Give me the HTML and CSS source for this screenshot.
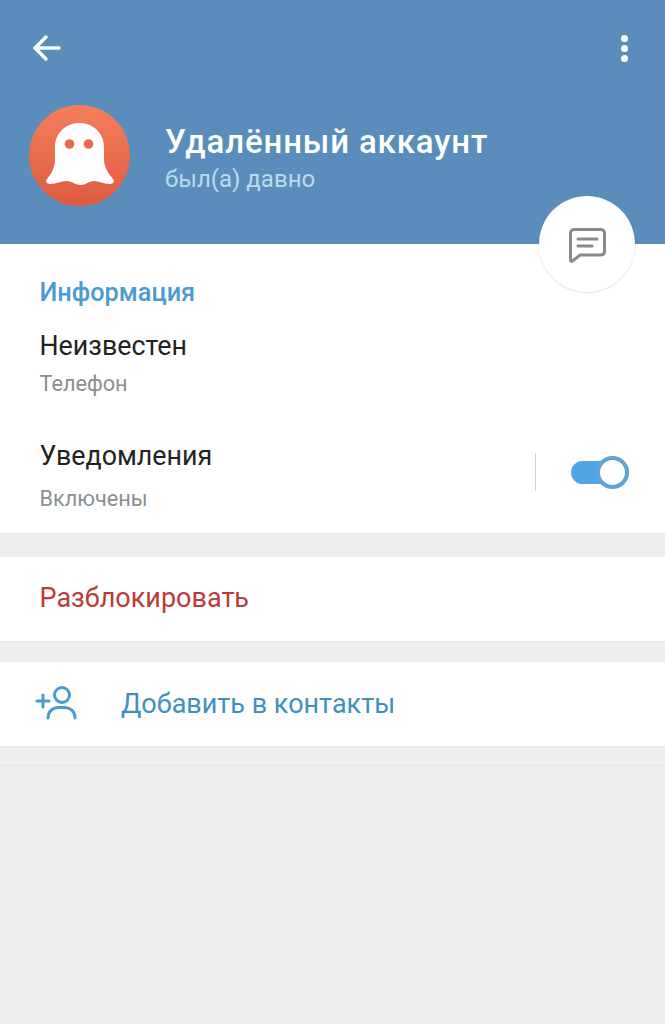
FILE: index.html
```html
<!DOCTYPE html>
<html lang="ru">
<head>
    <meta charset="UTF-8">
    <meta name="viewport" content="width=device-width, initial-scale=1.0">
    <title>Удалённый аккаунт</title>
    <link rel="stylesheet" href="styles.css">
</head>
<body>

<header class="profile-header">
    <div class="toolbar">
        <svg class="back-icon" width="32" height="32" viewBox="0 0 32 32" fill="none" stroke="#fff" stroke-width="3.4" stroke-linecap="round" stroke-linejoin="round">
            <path d="M5 16H29"/>
            <path d="M16 5L5 16L16 27"/>
        </svg>
        <div class="more-icon"><span></span><span></span><span></span></div>
    </div>
    <div class="profile">
        <div class="avatar">
            <svg width="68" height="64" viewBox="0 0 68 64">
                <path fill="#fff" d="M33.500 0C20 0 9 10 9 24V36C9 44 6 50 1 56C-1 59 1 61 4 61C11 61 15 58 21 58C26 58 29 62 34.500 62C40 62 43 58 48 58C53 58 57 61 64 61C67 61 69 59 67 56C62 50 58 44 58 36V24C58 10 47 0 33.500 0Z"/>
                <circle cx="23.500" cy="21" r="4.800" fill="#E8694B"/>
                <circle cx="42.500" cy="21" r="4.800" fill="#E8694B"/>
            </svg>
        </div>
        <div class="profile-text">
            <h1>Удалённый аккаунт</h1>
            <p>был(а) давно</p>
        </div>
    </div>
    <div class="message-btn">
        <svg width="40" height="38" viewBox="0 0 40 38" fill="none" stroke="#8a8a8a" stroke-width="3" stroke-linecap="round" stroke-linejoin="round">
            <path d="M3.500 8.500C3.500 6 5 4.500 7.500 4.500H33.500C36 4.500 37.500 6 37.500 8.500V26C37.500 28.500 36 30 33.500 30H13L5.500 36C4.500 36.700 3.500 36 3.500 35Z"/>
            <path d="M11 14H30"/>
            <path d="M11 21H25"/>
        </svg>
    </div>
</header>

<section class="card info-card">
    <h2>Информация</h2>
    <div class="info-row">
        <div class="value">Неизвестен</div>
        <div class="label">Телефон</div>
    </div>
    <div class="info-row notify-row">
        <div>
            <div class="value">Уведомления</div>
            <div class="label label-notify">Включены</div>
        </div>
        <div class="notify-control">
            <div class="divider"></div>
            <div class="switch"><span class="knob"></span></div>
        </div>
    </div>
</section>

<section class="card action-card">
    <span class="unblock">Разблокировать</span>
</section>

<section class="card action-card add-card">
    <svg class="add-icon" width="42" height="34" viewBox="0 0 42 34" fill="none" stroke="#4A9BCF" stroke-width="3" stroke-linecap="round">
        <path d="M2 15H14"/>
        <path d="M8 9V21"/>
        <circle cx="27" cy="9" r="7.500"/>
        <path d="M13 32C13 25 18 21.500 24 21.500H29C35 21.500 40 25 40 32"/>
    </svg>
    <span class="add-text">Добавить в контакты</span>
</section>

<div class="bottom-line"></div>

</body>
</html>
```

FILE: styles.css
```css
* {
    box-sizing: border-box;
}
body {
    margin: 0;
    min-height: 1024px;
    background-color: #EFEFEF;
    font-family: Roboto, "Noto Sans", sans-serif;
    color: #222;
}
.profile-header {
    position: relative;
    height: 244px;
    padding: 32px 30px 0 30px;
    background-color: #5A8DBB;
}
.toolbar {
    display: flex;
    justify-content: space-between;
    align-items: center;
    height: 32px;
}
.more-icon {
    display: flex;
    flex-direction: column;
    gap: 3px;
    margin-right: 7px;
}
.more-icon span {
    width: 7px;
    height: 7px;
    border-radius: 50%;
    background-color: #fff;
}
.profile {
    display: flex;
    align-items: center;
    gap: 35px;
    margin-top: 41px;
    margin-left: -1px;
}
.avatar {
    display: flex;
    align-items: center;
    justify-content: center;
    width: 101px;
    height: 101px;
    padding-bottom: 1px;
    border-radius: 50%;
    background: linear-gradient(#F57F5B, #DE5A42);
}
.profile-text {
    padding-top: 6px;
}
.profile-text h1 {
    margin: 0;
    font-size: 33px;
    font-weight: 500;
    line-height: 36px;
    letter-spacing: 0.85px;
    color: #fff;
}
.profile-text p {
    margin: 5px 0 0 0;
    font-size: 24px;
    line-height: 28px;
    color: #BBDBF1;
}
.message-btn {
    position: absolute;
    top: 196px;
    left: 539px;
    display: flex;
    align-items: center;
    justify-content: center;
    width: 96px;
    height: 96px;
    border-radius: 50%;
    background-color: #fff;
    box-shadow: 0 1px 2px rgba(0, 0, 0, 0.12);
}
.card {
    background-color: #fff;
    box-shadow: 0 1px 2px rgba(0, 0, 0, 0.04);
}
.info-card {
    height: 289px;
    padding: 34px 36px 0 39.500px;
}
.info-card h2 {
    margin: 0;
    font-size: 25.300px;
    font-weight: 500;
    line-height: 30px;
    color: #4A9BCF;
}
.info-row {
    margin-top: 21px;
}
.value {
    font-size: 26.800px;
    line-height: 34px;
}
.label {
    margin-top: 8px;
    font-size: 21.700px;
    line-height: 26px;
    color: #8A8F93;
}
.notify-row {
    display: flex;
    justify-content: space-between;
    margin-top: 42px;
}
.label-notify {
    margin-top: 13px;
}
.notify-control {
    display: flex;
    align-items: center;
    gap: 35px;
    height: 38px;
    margin-top: 14px;
}
.divider {
    width: 1px;
    height: 38px;
    background-color: #D5D5D5;
}
.switch {
    position: relative;
    width: 58px;
    height: 23px;
    border-radius: 12px;
    background-color: #52A5E5;
}
.knob {
    position: absolute;
    top: -5px;
    right: 0;
    width: 33px;
    height: 33px;
    border: 4px solid #5FA4D8;
    border-radius: 50%;
    background-color: #fff;
}
.action-card {
    display: flex;
    align-items: center;
    height: 84px;
    margin-top: 24px;
    padding-left: 39.500px;
    padding-bottom: 2px;
    font-size: 27px;
}
.unblock {
    color: #BC3A3A;
}
.add-card {
    margin-top: 21px;
    padding-left: 35px;
    padding-bottom: 1px;
    gap: 44px;
}
.add-icon {
    margin-top: -2px;
}
.add-text {
    color: #3F90BF;
}
.bottom-line {
    height: 1px;
    margin-top: 19px;
    background-color: #E6E6E6;
}
```
